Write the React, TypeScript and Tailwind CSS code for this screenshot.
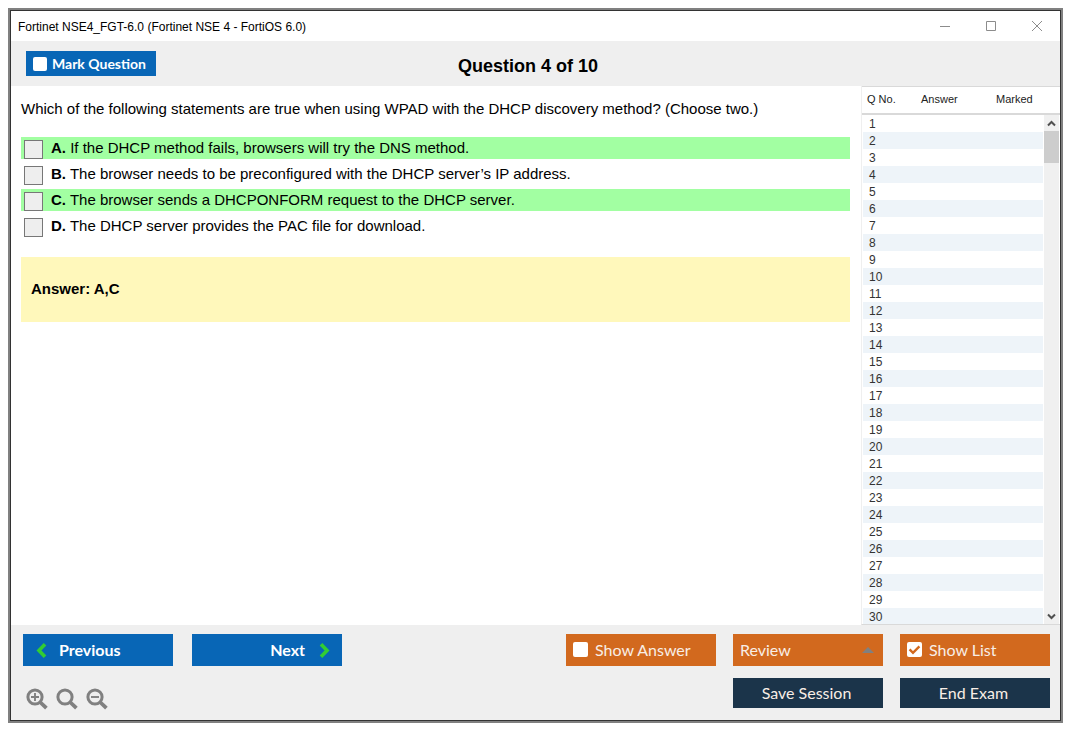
import { useState } from "react";

const options = [
  { letter: "A", text: "If the DHCP method fails, browsers will try the DNS method.", correct: true },
  { letter: "B", text: "The browser needs to be preconfigured with the DHCP server’s IP address.", correct: false },
  { letter: "C", text: "The browser sends a DHCPONFORM request to the DHCP server.", correct: true },
  { letter: "D", text: "The DHCP server provides the PAC file for download.", correct: false },
];

const questionNumbers = Array.from({ length: 30 }, (_, i) => i + 1);

function TitleBar() {
  return (
    <div className="flex h-[30px] shrink-0 items-center justify-between bg-white pl-[7px] pr-[7px] pt-px">
      <span className="text-xs">Fortinet NSE4_FGT-6.0 (Fortinet NSE 4 - FortiOS 6.0)</span>
      <div className="flex gap-[14px] pb-[2px]">
        <button aria-label="Minimize" className="flex h-5 w-8 items-center justify-center">
          <svg width="12" height="12" viewBox="0 0 12 12" stroke="#8c8c8c" fill="none">
            <path d="M1 6.5h10" />
          </svg>
        </button>
        <button aria-label="Maximize" className="flex h-5 w-8 items-center justify-center">
          <svg width="12" height="12" viewBox="0 0 12 12" stroke="#8c8c8c" fill="none">
            <path d="M1.5 1.5h9v9h-9z" />
          </svg>
        </button>
        <button aria-label="Close" className="flex h-5 w-8 items-center justify-center">
          <svg width="12" height="12" viewBox="0 0 12 12" stroke="#8c8c8c" fill="none">
            <path d="M1 1l10 10M11 1L1 11" />
          </svg>
        </button>
      </div>
    </div>
  );
}

function Check({ checked, onChange, small }: { checked: boolean; onChange: () => void; small?: boolean }) {
  return (
    <span className="relative flex shrink-0">
      <input
        type="checkbox"
        checked={checked}
        onChange={onChange}
        className={small ? "size-[14px] appearance-none rounded-xs bg-white" : "size-[15px] appearance-none rounded-xs bg-white"}
      />
      {checked && (
        <svg className="pointer-events-none absolute inset-0" width="15" height="15" viewBox="0 0 15 15" fill="none" stroke="#d2691e" strokeWidth="2.4">
          <path d="M2.6 7.4l3.4 3.4 6.4-6.4" />
        </svg>
      )}
    </span>
  );
}

function Magnifier({ label, sign }: { label: string; sign?: string }) {
  return (
    <button aria-label={label} className="flex">
      <svg width="22" height="22" viewBox="0 0 22 22" fill="none" stroke="#808080">
        <circle cx="9" cy="9" r="7.1" strokeWidth="3" />
        <path d="M14 14l6.4 6.2" strokeWidth="3.8" />
        {sign && <path d={sign} strokeWidth="1.9" />}
      </svg>
    </button>
  );
}

function QuestionList() {
  return (
    <aside className="flex w-[199px] shrink-0 flex-col overflow-hidden border-b border-l border-b-[#d9d9d9] border-l-[#efefef] text-[11px] text-[#333]">
      <div className="flex h-[29px] shrink-0 items-center border-b-2 border-t border-b-[#d9d9d9] border-t-[#d9d9d9] pb-px text-[#222]">
        <span id="col-no" className="w-[59px] pl-[5px]">Q No.</span>
        <span id="col-answer" className="w-[75px]">Answer</span>
        <span id="col-marked">Marked</span>
      </div>
      <div className="flex min-h-0 flex-1">
        <div className="min-h-0 flex-1 overflow-hidden pl-px">
          <table className="w-full border-collapse" aria-label="Questions">
            <tbody>
              {questionNumbers.map((n) => (
                <tr key={n} className="h-[17px] even:bg-[#eef4f9]">
                  <td headers="col-no" className="w-[58px] p-0 pl-[6px] pt-px text-xs leading-4">{n}</td>
                  <td headers="col-answer" className="w-[75px] p-0" />
                  <td headers="col-marked" className="p-0" />
                </tr>
              ))}
            </tbody>
          </table>
        </div>
        <div className="ml-px mr-px flex w-[15px] flex-col items-center bg-[#f0f0f0]">
          <button aria-label="Scroll up" className="flex h-4 w-full items-center justify-center">
            <svg width="9" height="7" viewBox="0 0 9 7" fill="none" stroke="#505050" strokeWidth="2">
              <path d="M1 5.5L4.5 2 8 5.5" />
            </svg>
          </button>
          <div className="h-8 w-full bg-[#cdcdcd]" />
          <button aria-label="Scroll down" className="mt-auto flex h-4 w-full items-center justify-center">
            <svg width="9" height="7" viewBox="0 0 9 7" fill="none" stroke="#505050" strokeWidth="2">
              <path d="M1 1.5L4.5 5 8 1.5" />
            </svg>
          </button>
        </div>
      </div>
    </aside>
  );
}

export default function App() {
  const [marked, setMarked] = useState(false);
  const [showAnswer, setShowAnswer] = useState(false);
  const [showList, setShowList] = useState(true);

  return (
    <div className="flex h-screen flex-col bg-white pb-3 pl-2 pr-3 pt-2 font-['Liberation_Sans',Arial,sans-serif] text-black">
      <div className="flex min-h-0 flex-1 flex-col border-2 border-[#808080]">
        <div className="flex min-h-0 flex-1 flex-col border border-[#333]">
          <TitleBar />

          <header className="grid h-[45px] shrink-0 grid-cols-[1fr_auto_1fr] items-center bg-[#efefef] pl-[15px] pr-[30px]">
            <label className="mb-px flex h-[25px] w-[130px] items-center gap-[5px] bg-[#0866b6] pl-[7px] pt-px font-['Lato',sans-serif] text-sm font-bold text-white">
              <Check small checked={marked} onChange={() => setMarked(!marked)} />
              Mark Question
            </label>
            <h1 className="pt-1 text-lg font-bold">Question 4 of 10</h1>
          </header>

          <div className="flex min-h-0 flex-1">
            <main className="min-w-0 flex-1 pl-[10px] pr-[11px] pt-3 text-[15px]">
              <p className="leading-[22px]">
                Which of the following statements are true when using WPAD with the DHCP discovery method? (Choose two.)
              </p>
              <div className="mt-[17px] flex flex-col gap-1">
                {options.map((o) => (
                  <label key={o.letter} className={o.correct ? "flex h-[22px] gap-2 bg-[#a2ffa2] pl-[3px]" : "flex h-[22px] gap-2 pl-[3px]"}>
                    <input type="checkbox" className="mt-[3px] size-[19px] shrink-0 appearance-none border border-[#777] bg-[#eee] checked:bg-[#0866b6]" />
                    <span className="leading-[22px]">
                      <b>{o.letter}.</b> {o.text}
                    </span>
                  </label>
                ))}
              </div>
              <div className="mt-5 flex h-[65px] items-center bg-[#fff8bb] pl-[10px] font-bold">Answer: A,C</div>
            </main>
            {showList && <QuestionList />}
          </div>

          <footer className="flex h-[95px] shrink-0 justify-between bg-[#efefef] pb-[10px] pl-3 pr-[10px] pt-[9px] font-['Lato',sans-serif] text-base">
            <div className="flex flex-col justify-between">
              <div className="flex gap-[19px] font-bold text-white">
                <button className="flex h-8 w-[150px] items-center gap-3 bg-[#0866b6] pl-[13px]">
                  <svg width="11" height="15" viewBox="0 0 11 15" fill="none" stroke="#32cd32" strokeWidth="3.6">
                    <path d="M9 1.3L3 7.5 9 13.7" />
                  </svg>
                  Previous
                </button>
                <button className="flex h-8 w-[150px] items-center justify-end gap-[14px] bg-[#0866b6] pr-3">
                  Next
                  <svg width="11" height="15" viewBox="0 0 11 15" fill="none" stroke="#32cd32" strokeWidth="3.6">
                    <path d="M2 1.3L8 7.5 2 13.7" />
                  </svg>
                </button>
              </div>
              <div className="flex gap-2 pl-[3px]">
                <Magnifier label="Zoom in" sign="M5 9h8M9 5v8" />
                <Magnifier label="Reset zoom" />
                <Magnifier label="Zoom out" sign="M5 9h8" />
              </div>
            </div>

            <div className="grid grid-cols-[150px_150px_150px] content-start gap-x-[17px] gap-y-3 text-[#f8eee6]">
              <label className="flex h-8 items-center gap-[7px] bg-[#d2691e] pb-px pl-[7px]">
                <Check checked={showAnswer} onChange={() => setShowAnswer(!showAnswer)} />
                Show Answer
              </label>
              <button aria-haspopup="menu" className="flex h-8 items-center justify-between bg-[#d2691e] pb-px pl-[7px] pr-[9px]">
                Review
                <svg width="12" height="6" viewBox="0 0 12 6" fill="#808080">
                  <path d="M0 6L6 0l6 6z" />
                </svg>
              </button>
              <label className="flex h-8 items-center gap-[7px] bg-[#d2691e] pb-px pl-[7px]">
                <Check checked={showList} onChange={() => setShowList(!showList)} />
                Show List
              </label>
              <button className="col-start-2 h-[30px] bg-[#1b344a] pr-[3px]">Save Session</button>
              <button className="h-[30px] bg-[#1b344a] pr-[3px]">End Exam</button>
            </div>
          </footer>
        </div>
      </div>
    </div>
  );
}
